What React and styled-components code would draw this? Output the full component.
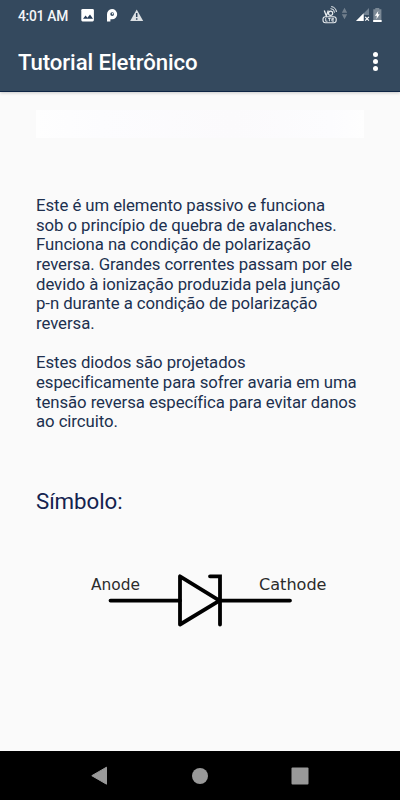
import React from 'react';
import styled, { createGlobalStyle } from 'styled-components';

const GlobalStyle = createGlobalStyle`
  body {
    margin: 0;
    background: #fafafa;
    font-family: Roboto, sans-serif;
  }
`

const Screen = styled.div`
  display: flex;
  flex-direction: column;
  width: 400px;
  height: 800px;
  overflow: hidden;
  background: #fafafa;
`

const Header = styled.header`
  box-sizing: border-box;
  height: 92px;
  background: #34495e;
  border-bottom: 1px solid #0d2444;
  box-shadow: 0 1px 3px rgba(0, 0, 0, 0.2);
`

const StatusBar = styled.div`
  display: flex;
  justify-content: space-between;
  height: 32px;
  padding: 0 16px 0 18px;
`

const StatusGroup = styled.div`
  display: flex;
  align-items: flex-start;
`

const Clock = styled.span`
  width: 62px;
  font-size: 13.8px;
  font-weight: 500;
  letter-spacing: -0.25px;
  line-height: 32px;
  white-space: nowrap;
  color: #f4f6f8;
`

const Toolbar = styled.div`
  display: flex;
  align-items: center;
  justify-content: space-between;
  height: 59px;
  padding: 0 22px 0 18px;
`

const Title = styled.h1`
  margin: 0;
  font-size: 22.2px;
  font-weight: 500;
  letter-spacing: -0.08px;
  line-height: 30px;
  white-space: nowrap;
  color: #fff;
`

const MenuButton = styled.div`
  display: flex;
  flex-direction: column;
  gap: 2px;
`

const Dot = styled.span`
  width: 5px;
  height: 5px;
  border-radius: 50%;
  background: #fff;
`

const Content = styled.main`
  flex: 1;
  padding: 18px 36px 0;
`

const Banner = styled.div`
  height: 28px;
  margin-bottom: 58px;
  background: linear-gradient(90deg, #fefefe, #fcfcfe 20%, #fbfafc 60%, #fcfcfe 90%, #fefefe);
`

const Text = styled.p`
  margin: 0 0 19.6px;
  font-size: 16.75px;
  letter-spacing: -0.06px;
  line-height: 19.65px;
  white-space: pre;
  color: #20304f;
`

const Subtitle = styled.h2`
  margin: 55px 0 0;
  font-size: 22.3px;
  font-weight: 400;
  letter-spacing: -0.08px;
  line-height: 28px;
  color: #14234f;
`

const Symbol = styled.svg`
  display: block;
  width: 328px;
  height: 90px;
  margin-top: 40px;
`

const NavBar = styled.nav`
  display: flex;
  align-items: center;
  justify-content: space-around;
  box-sizing: border-box;
  height: 49px;
  padding: 0 50px;
  background: #000;
`

const NotificationIcons = () => (
  <svg width="80" height="32" viewBox="80 0 80 32">
    <rect x="81.3" y="9" width="12.6" height="12.4" rx="1.3" fill="#fff" />
    <path d="M83 18.8l2.6-3.2 1.8 2.2 2.6-3.4 3 4.4z" fill="#253b57" />
    <path
      d="M110.4 21.6h-3.4v-7.2a5.1 5.1 0 1 1 5.1 4.8h-1.7z M112.2 12.2a1.9 1.9 0 1 0 0 3.8 1.9 1.9 0 0 0 0-3.8z"
      fill="#fff"
      fillRule="evenodd"
    />
    <circle cx="112.6" cy="13.8" r=".8" fill="#fff" />
    <path d="M136.7 9.5L143.2 21h-13z" fill="#dce0e3" />
    <path d="M136.7 13.1v4M136.7 18.2v1.5" stroke="#2c4058" strokeWidth="1.5" />
  </svg>
)

const SignalIcons = () => (
  <svg width="62" height="32" viewBox="322 0 62 32">
    <g fill="none" stroke="#e8ecef">
      <path d="M324.3 10.5l2 5.4 2-5.4" strokeWidth="1.3" />
      <circle cx="330.6" cy="13.3" r="2.1" strokeWidth="1.2" />
      <path d="M330.5 8.6a4 4 0 0 1 4 4M331.2 6.6a5.4 5.4 0 0 1 5.2 5.4" strokeWidth="1" />
      <rect x="323" y="16.7" width="13.2" height="6" rx="2.4" strokeWidth="1.1" />
      <path
        d="M325.7 18v3.2h1.8M328 18.3h2.8M329.4 18v3.3M334 18.3h-2.1v2.8h2.1M332 19.7h1.8"
        strokeWidth=".9"
      />
    </g>
    <path d="M344.5 7.8l2.7 5h-5.4zM344.5 19.2l2.7-5h-5.4z" fill="#717f8d" />
    <path d="M369 8v7h-5v6h-8z" fill="#708090" />
    <path d="M363.6 13.2V21h-7.6z" fill="#fff" />
    <path d="M365.2 16.8l3.7 3.8M368.9 16.8l-3.7 3.8" stroke="#fff" strokeWidth="1.2" />
    <path d="M373.3 9.3h2v-1.3h4v1.3h2.1v12.6h-8.1z" fill="#7b8996" />
    <rect x="373.2" y="20" width="8.4" height="2" fill="#fff" />
    <path d="M378.3 11l-3.4 4.7h2l-.5 3.6 3.3-5h-1.9z" fill="#fff" />
  </svg>
)

// zener diode, with the hooked cathode bar
const ZenerSymbol = () => (
  <Symbol viewBox="36 555 328 90">
    <g fill="none" stroke="#000" strokeWidth="3.8" strokeLinecap="round">
      <path d="M110.5 600.6H180M220 600.6H290" />
      <path d="M180 576.3v48.2l39.5-23.9z" strokeLinejoin="round" />
      <path d="M210 576.3h10v48.2" strokeLinejoin="miter" />
    </g>
    <g fill="#2b2b2b" fontFamily="DejaVu Sans, sans-serif" fontSize="16">
      <text x="91" y="590" textLength="49" lengthAdjust="spacingAndGlyphs">Anode</text>
      <text x="259" y="590" textLength="67.5" lengthAdjust="spacingAndGlyphs">Cathode</text>
    </g>
  </Symbol>
)

const App = () => (
  <Screen>
    <GlobalStyle />
    <Header>
      <StatusBar>
        <StatusGroup>
          <Clock>4:01 AM</Clock>
          <NotificationIcons />
        </StatusGroup>
        <SignalIcons />
      </StatusBar>
      <Toolbar>
        <Title>Tutorial Eletrônico</Title>
        <MenuButton>
          <Dot />
          <Dot />
          <Dot />
        </MenuButton>
      </Toolbar>
    </Header>

    <Content>
      <Banner />
      <Text>{`Este é um elemento passivo e funciona
sob o princípio de quebra de avalanches.
Funciona na condição de polarização
reversa. Grandes correntes passam por ele
devido à ionização produzida pela junção
p-n durante a condição de polarização
reversa.`}</Text>
      <Text>{`Estes diodos são projetados
especificamente para sofrer avaria em uma
tensão reversa específica para evitar danos
ao circuito.`}</Text>
      <Subtitle>Símbolo:</Subtitle>
      <ZenerSymbol />
    </Content>

    <NavBar>
      <svg width="20" height="20" viewBox="0 0 20 20">
        <path d="M1.8 9.7L16.5 1.2v17z" fill="#999" stroke="#999" strokeLinejoin="round" />
      </svg>
      <svg width="20" height="20" viewBox="0 0 20 20">
        <circle cx="10" cy="10" r="8" fill="#999" />
      </svg>
      <svg width="20" height="20" viewBox="0 0 20 20">
        <rect x="1.5" y="1.5" width="17" height="17" rx="1" fill="#999" />
      </svg>
    </NavBar>
  </Screen>
)

export default App;
